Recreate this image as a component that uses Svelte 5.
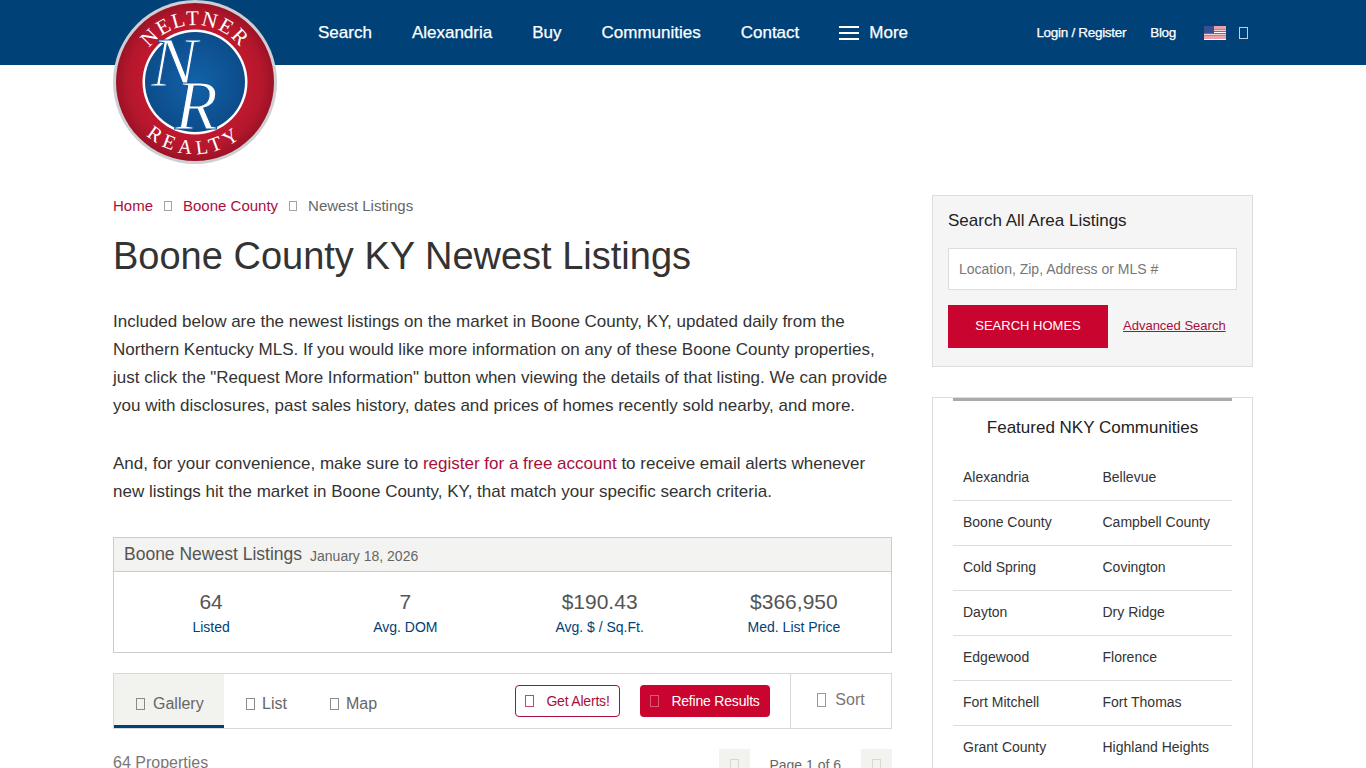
<script>
  const nav = ['Search', 'Alexandria', 'Buy', 'Communities', 'Contact'];
  const stats = [
    ['64', 'Listed'],
    ['7', 'Avg. DOM'],
    ['$190.43', 'Avg. $ / Sq.Ft.'],
    ['$366,950', 'Med. List Price']
  ];
  const communities = [
    'Alexandria', 'Bellevue', 'Boone County', 'Campbell County', 'Cold Spring', 'Covington',
    'Dayton', 'Dry Ridge', 'Edgewood', 'Florence', 'Fort Mitchell', 'Fort Thomas',
    'Grant County', 'Highland Heights'
  ];
</script>

<div class="page">
  <header class="header">
    <div class="wrap head-row">
      <svg class="logo" viewBox="0 0 164 164" width="164" height="164" aria-label="Neltner Realty">
        <defs>
          <radialGradient id="red" cx="50%" cy="50%" r="50%">
            <stop offset="0.6" stop-color="#c2182f" />
            <stop offset="0.85" stop-color="#b5172c" />
            <stop offset="1" stop-color="#9c1226" />
          </radialGradient>
          <radialGradient id="blue" cx="50%" cy="50%" r="55%">
            <stop offset="0" stop-color="#1262a8" />
            <stop offset="1" stop-color="#0c4a88" />
          </radialGradient>
          <path id="arc-top" d="M 25 82 A 57 57 0 0 1 139 82" />
          <path id="arc-bot" d="M 10 82 A 72 72 0 0 0 154 82" />
        </defs>
        <circle cx="82" cy="82" r="82" fill="#cfcfd3" />
        <circle cx="82" cy="82" r="79" fill="url(#red)" />
        <circle cx="82" cy="82" r="52.5" fill="#fff" />
        <circle cx="82" cy="82" r="50" fill="url(#blue)" />
        <text class="ring-text top"><textPath href="#arc-top" startOffset="50%" text-anchor="middle">NELTNER</textPath></text>
        <text class="ring-text bot"><textPath href="#arc-bot" startOffset="50%" text-anchor="middle">REALTY</textPath></text>
        <text class="mono" x="38" y="86" font-size="70">N</text>
        <text class="mono" x="62" y="129" font-size="70">R</text>
      </svg>
      <nav class="main-nav">
        {#each nav as item}
          <a href="#top">{item}</a>
        {/each}
        <a href="#top" class="more"><span class="burger"><i></i><i></i><i></i></span>More</a>
      </nav>
      <div class="util">
        <a href="#top" class="login">Login / Register</a>
        <a href="#top" class="blog">Blog</a>
        <svg class="flag" viewBox="0 0 22 14" width="22" height="14" aria-hidden="true">
          <rect width="22" height="14" fill="#fff" />
          <path d="M0 1h22M0 3.2h22M0 5.4h22M0 7.6h22M0 9.8h22M0 12h22" stroke="#d8435a" stroke-width="1.2" />
          <rect width="10" height="7" fill="#3a4f8f" />
        </svg>
        <span class="tofu util-tofu"></span>
      </div>
    </div>
  </header>

  <div class="wrap content">
    <main class="main">
      <div class="crumbs">
        <a href="#top">Home</a><span class="tofu small"></span><a href="#top">Boone County</a><span class="tofu small"></span><span>Newest Listings</span>
      </div>
      <h1>Boone County KY Newest Listings</h1>
      <p>Included below are the newest listings on the market in Boone County, KY, updated daily from the Northern Kentucky MLS. If you would like more information on any of these Boone County properties, just click the "Request More Information" button when viewing the details of that listing. We can provide you with disclosures, past sales history, dates and prices of homes recently sold nearby, and more.</p>
      <p class="last">And, for your convenience, make sure to <a href="#top">register for a free account</a> to receive email alerts whenever new listings hit the market in Boone County, KY, that match your specific search criteria.</p>

      <section class="stats">
        <div class="stats-head"><strong>Boone Newest Listings</strong><span>January 18, 2026</span></div>
        <div class="stats-body">
          {#each stats as s}
            <div class="stat"><b>{s[0]}</b><span>{s[1]}</span></div>
          {/each}
        </div>
      </section>

      <div class="toolbar">
        <a href="#top" class="tab active"><span class="tofu"></span>Gallery</a>
        <a href="#top" class="tab"><span class="tofu"></span>List</a>
        <a href="#top" class="tab"><span class="tofu"></span>Map</a>
        <div class="actions">
          <button class="btn outline"><span class="tofu"></span>Get Alerts!</button>
          <button class="btn solid"><span class="tofu"></span>Refine Results</button>
        </div>
        <div class="sort"><span class="tofu"></span>Sort</div>
      </div>

      <div class="pager-row">
        <span class="count">64 Properties</span>
        <div class="pager">
          <span class="page-btn first"><span class="tofu"></span></span>
          <span class="page-label">Page 1 of 6</span>
          <span class="page-btn"><span class="tofu"></span></span>
        </div>
      </div>
    </main>

    <aside class="side">
      <div class="search-box">
        <h3>Search All Area Listings</h3>
        <input type="text" placeholder="Location, Zip, Address or MLS #" />
        <div class="search-actions">
          <button class="search-btn">SEARCH HOMES</button>
          <a href="#top">Advanced Search</a>
        </div>
      </div>
      <div class="feat">
        <div class="feat-bar"></div>
        <h3>Featured NKY Communities</h3>
        <ul>
          {#each communities as c}
            <li><a href="#top">{c}</a></li>
          {/each}
        </ul>
      </div>
    </aside>
  </div>
</div>

<style>
  :global(body) {
    margin: 0;
    background: #fff;
    font-family: "Liberation Sans", Arial, sans-serif;
    color: #333;
  }
  a { text-decoration: none; color: inherit; }
  .page { height: 768px; overflow: hidden; position: relative; }
  .wrap { width: 1140px; margin: 0 auto; }

  .header { height: 65px; background: #004278; color: #fff; }
  .head-row { display: flex; align-items: center; height: 65px; position: relative; -webkit-text-stroke: 0.25px #fff; }
  .logo { position: absolute; left: 0; top: 0; z-index: 2; -webkit-text-stroke: 0; }
  .ring-text { font-family: "Liberation Serif", serif; fill: #fff; }
  .ring-text.top { font-size: 21px; letter-spacing: 1.8px; }
  .ring-text.bot { font-size: 20px; letter-spacing: 5px; }
  .mono { font-family: "Liberation Serif", serif; font-style: italic; fill: #fff; stroke: #0f579e; stroke-width: 1.2px; }

  .main-nav { display: flex; align-items: center; gap: 40px; margin-left: 205px; font-size: 17px; }
  .more { display: flex; align-items: center; gap: 10px; }
  .burger { display: flex; flex-direction: column; gap: 4px; width: 20px; }
  .burger i { display: block; height: 2px; background: #fff; }

  .util { display: flex; align-items: center; margin-left: auto; margin-right: 5px; font-size: 13.5px; letter-spacing: -0.3px; }
  .blog { margin-left: 24px; }
  .flag { margin-left: 28px; }
  .util-tofu { margin-left: 13px; width: 9px; height: 12px; }

  .tofu {
    display: inline-block;
    box-sizing: border-box;
    width: 9px;
    height: 12px;
    border: 1px solid currentColor;
    opacity: 0.75;
    vertical-align: -1px;
  }

  .content { display: flex; gap: 40px; align-items: flex-start; }
  .main { width: 779px; flex: none; padding-top: 131px; }
  .crumbs { display: flex; align-items: center; font-size: 15px; line-height: 20px; color: #666; }
  .crumbs a { color: #a80f3c; }
  .crumbs .small { width: 8px; height: 10px; margin: 0 11px; opacity: 0.6; }
  h1 { margin: 17px 0 0; font-size: 38px; line-height: 46px; font-weight: 400; color: #333; }
  p { margin: 0 0 30px; font-size: 17px; line-height: 28px; color: #333; }
  h1 + p { margin-top: 29px; }
  p.last { margin-bottom: 31px; }
  p a { color: #a80f3c; }

  .stats { border: 1px solid #ccc; }
  .stats-head { height: 33px; background: #f3f3f1; border-bottom: 1px solid #ccc; display: flex; align-items: center; padding-left: 10px; color: #555; }
  .stats-head strong { font-weight: 400; font-size: 17.5px; }
  .stats-head span { font-size: 14px; margin-left: 8px; color: #666; padding-top: 2px; }
  .stats-body { display: grid; grid-template-columns: repeat(4, 1fr); height: 80px; }
  .stat { display: flex; flex-direction: column; align-items: center; padding-top: 16px; }
  .stat b { font-weight: 400; font-size: 21px; line-height: 28px; color: #555; }
  .stat span { font-size: 14px; line-height: 22px; color: #004278; }

  .toolbar { display: flex; align-items: stretch; height: 54px; margin-top: 20px; border: 1px solid #d8d8d8; font-size: 16px; color: #666; }
  .tab { display: flex; align-items: center; padding: 6px 0 0 22px; }
  .tab .tofu { margin-right: 7px; }
  .tab.active { width: 88px; padding-left: 22px; background: #f2f2ef; box-shadow: inset 0 -3px 0 #004278; color: #666; }
  .tab.active .tofu { margin-right: 8px; }
  .tab:nth-child(3) { padding-left: 43px; }
  .actions { display: flex; align-items: center; gap: 20px; margin-left: auto; padding-right: 20px; }
  .btn { height: 32px; border-radius: 4px; font: 14px "Liberation Sans", Arial, sans-serif; letter-spacing: -0.2px; box-sizing: border-box; padding: 0; cursor: pointer; }
  .btn .tofu { margin-right: 12px; }
  .outline { width: 105px; background: #fff; color: #a80f3c; border: 1px solid #a80f3c; }
  .solid { width: 130px; background: #c8042f; color: #fff; border: 0; }
  .solid .tofu { opacity: 0.35; }
  .sort { width: 101px; box-sizing: border-box; border-left: 1px solid #d8d8d8; display: flex; align-items: center; justify-content: center; gap: 9px; padding-bottom: 3px; color: #777; font-size: 16px; }
  .sort .tofu { width: 9px; height: 14px; }

  .pager-row { display: flex; justify-content: space-between; align-items: flex-start; margin-top: 20px; }
  .count { font-size: 16px; line-height: 26px; color: #777; padding-top: 1px; }
  .pager { display: flex; align-items: center; gap: 20px; }
  .page-btn { width: 31px; height: 32px; background: #f2f2ef; display: flex; align-items: center; justify-content: center; color: #ccc; }
  .page-btn.first { margin-right: -1px; }
  .page-label { font-size: 14px; color: #666; }

  .side { width: 321px; flex: none; padding-top: 130px; }
  .search-box { height: 172px; box-sizing: border-box; border: 1px solid #ddd; background: #f5f5f5; padding: 15px; }
  h3 { margin: 0; font-weight: 400; font-size: 17px; line-height: 20px; color: #222; }
  input { display: block; box-sizing: border-box; width: 289px; height: 42px; margin-top: 17px; border: 1px solid #ddd; background: #fff; padding: 0 10px; font: 14px "Liberation Sans", Arial, sans-serif; }
  input::placeholder { color: #777; opacity: 1; }
  .search-actions { display: flex; align-items: center; gap: 15px; margin-top: 15px; }
  .search-btn { width: 160px; height: 43px; background: #c8042f; color: #fff; border: 0; font: 13px "Liberation Sans", Arial, sans-serif; cursor: pointer; padding: 0 0 2px; }
  .search-actions a { color: #a80f3c; font-size: 13px; text-decoration: underline; padding-bottom: 2px; }

  .feat { margin-top: 30px; border: 1px solid #ddd; padding: 0 20px; position: relative; }
  .feat-bar { height: 3px; background: #aaa; }
  .feat h3 { text-align: center; margin-top: 17px; font-size: 17px; color: #222; }
  ul { list-style: none; margin: 18px 0 0; padding: 0; display: grid; grid-template-columns: 1fr 1fr; }
  li { height: 45px; box-sizing: border-box; border-bottom: 1px solid #ddd; display: flex; align-items: center; padding: 0 0 3px 10px; font-size: 14px; color: #333; }
</style>
